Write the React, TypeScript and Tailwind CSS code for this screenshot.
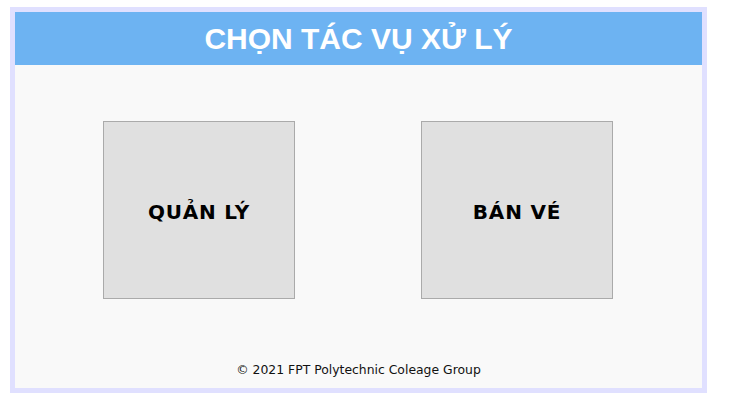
import React from "react";

const tasks = ["QUẢN LÝ", "BÁN VÉ"];

export default function App() {
  return (
    <div className="w-[730px] h-[420px] bg-white pt-[7px] pl-[10px]">
      <div className="w-[697px] h-[386px] border-[5px] border-[#e0e0ff] bg-[#f9f9f9] flex flex-col">
        {/* Header */}
        <div className="h-[53px] bg-[#6db3f2] flex items-center justify-center">
          <h1 className="text-white font-bold text-[30px] leading-none font-['Liberation_Sans',Arial,sans-serif]">
            CHỌN TÁC VỤ XỬ LÝ
          </h1>
        </div>

        {/* Task boxes */}
        <div className="flex gap-[126px] pt-[56px] pl-[88px]">
          {tasks.map((t) => (
            <button
              key={t}
              className="w-[192px] h-[178px] bg-[#e0e0e0] border border-[#aaaaaa] flex items-center justify-center pt-[3px] text-[20px] font-bold text-black tracking-[0.8px] font-['DejaVu_Sans',Verdana,sans-serif]"
            >
              {t}
            </button>
          ))}
        </div>

        {/* Footer */}
        <div className="mt-auto pb-[8px] text-center text-[12.4px] text-[#111] font-['DejaVu_Sans',Tahoma,sans-serif]">
          © 2021 FPT Polytechnic Coleage Group
        </div>
      </div>
    </div>
  );
}
